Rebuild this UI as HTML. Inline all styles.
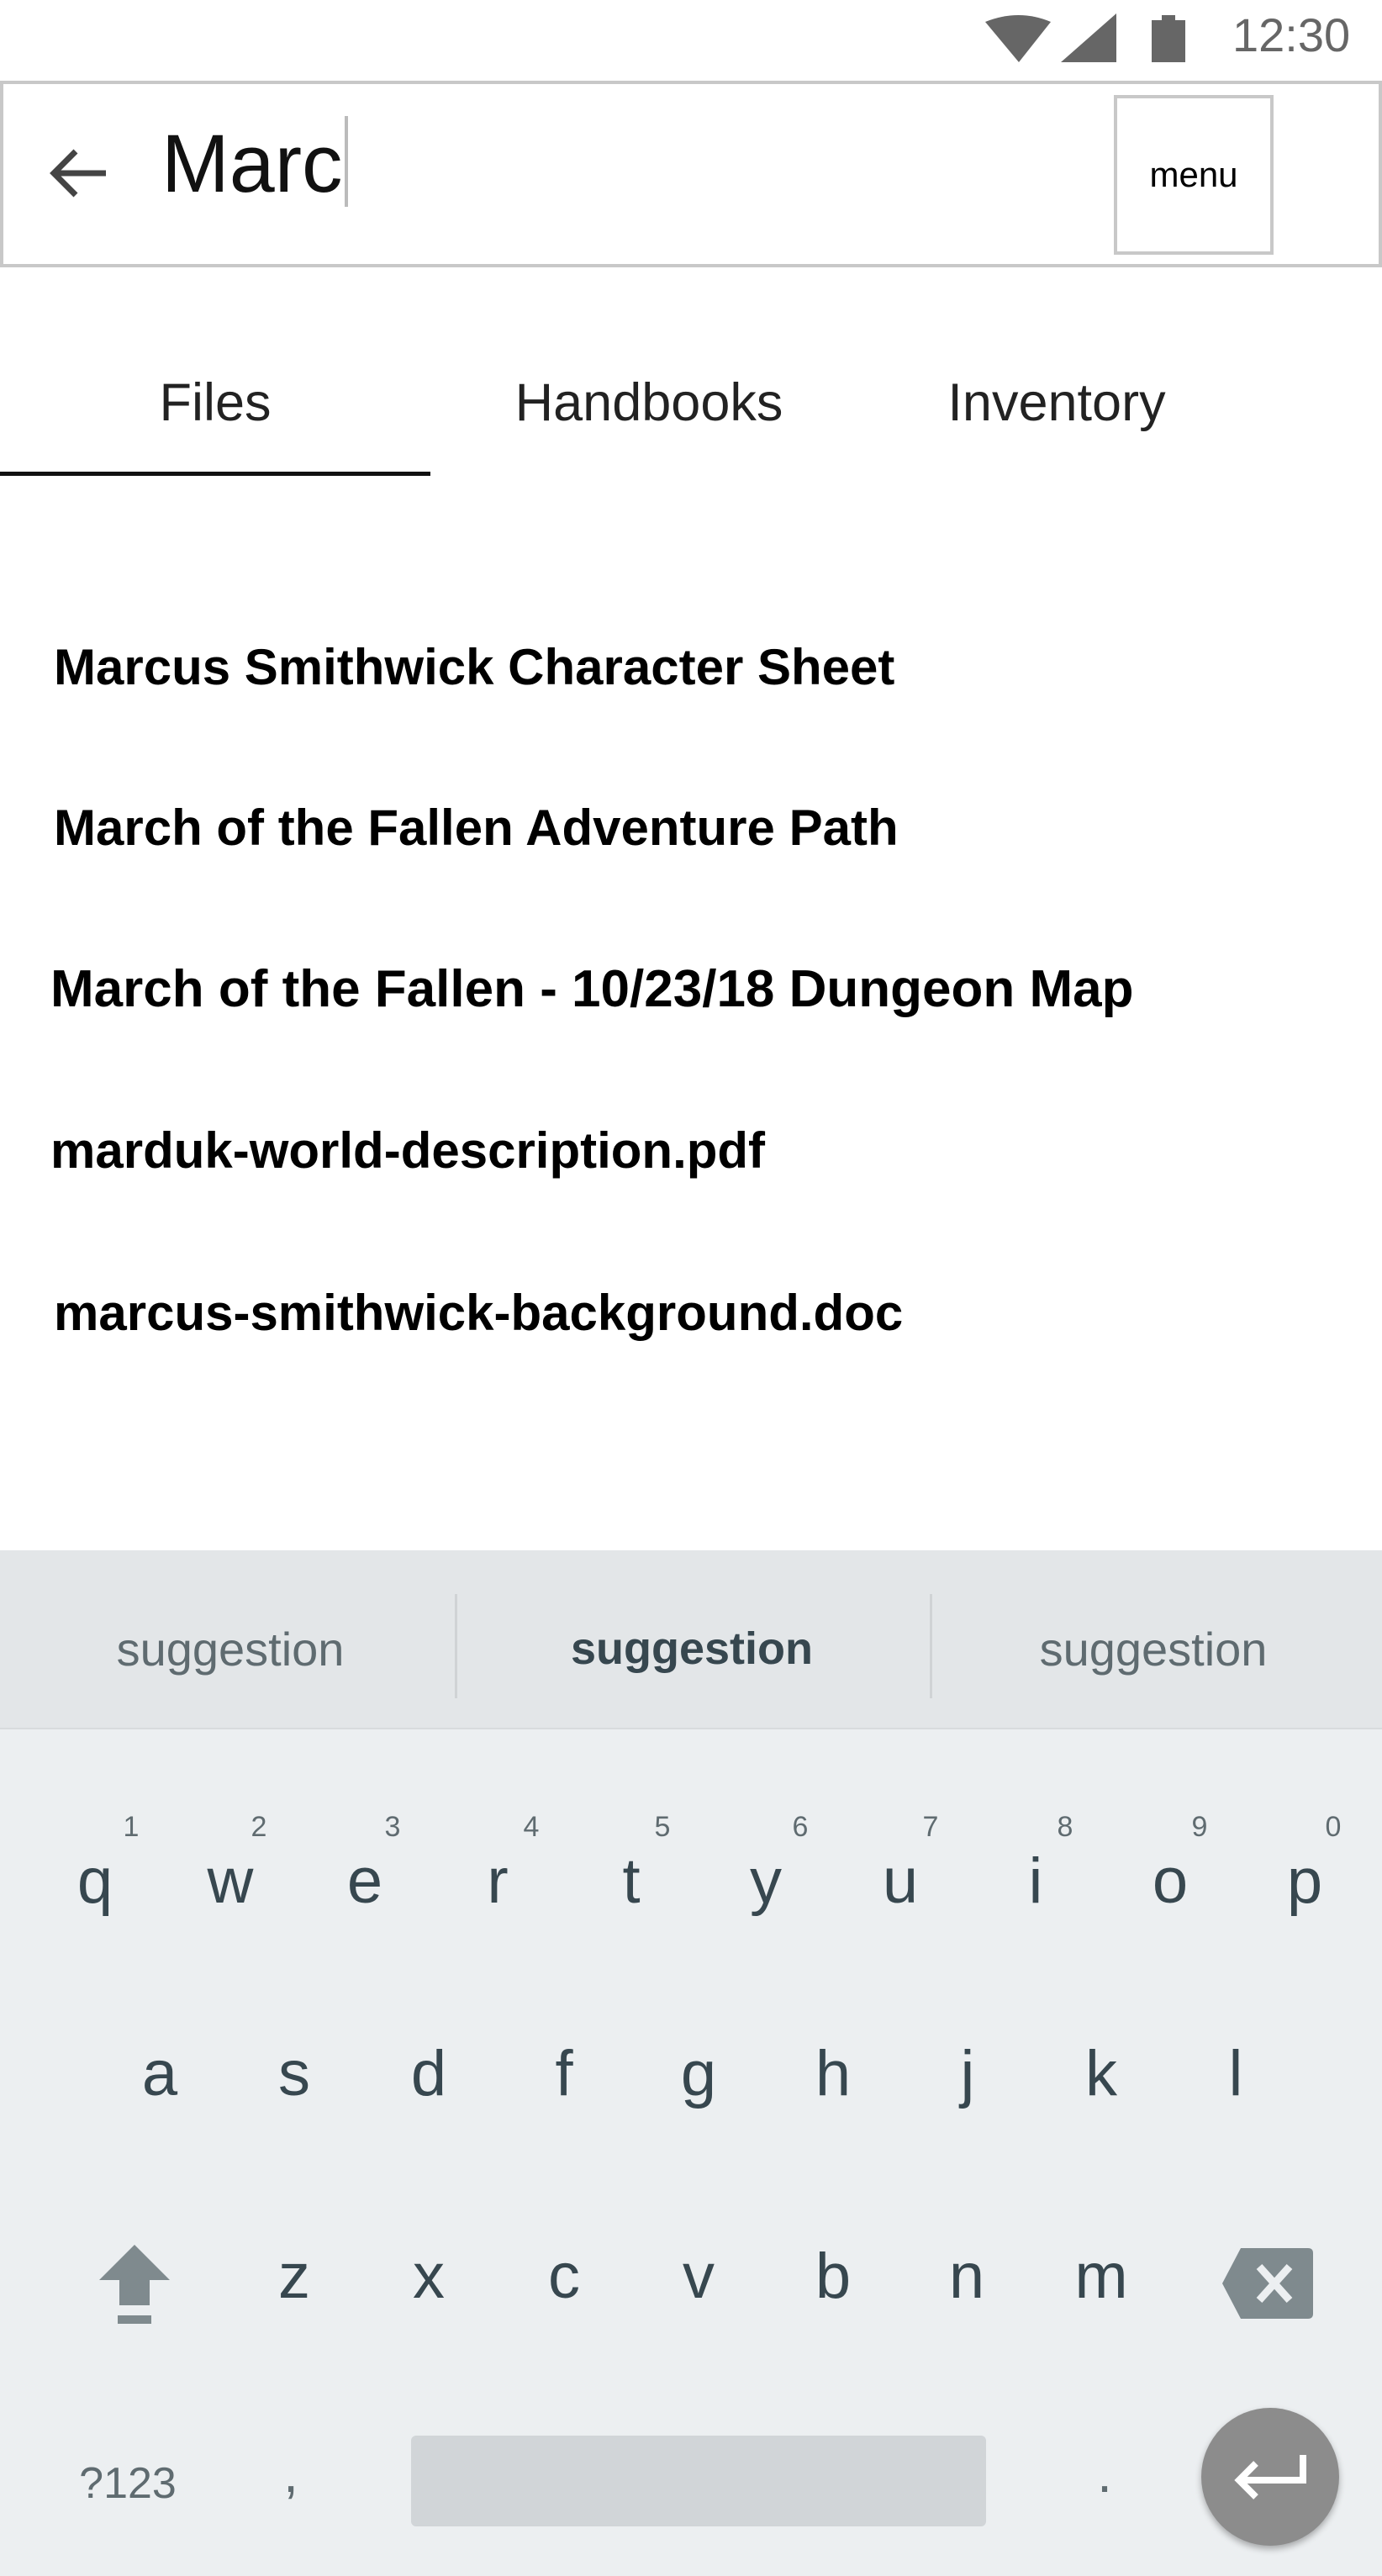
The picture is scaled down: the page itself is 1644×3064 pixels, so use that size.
<!DOCTYPE html>
<html><head><meta charset="utf-8"><style>
*{margin:0;padding:0;box-sizing:border-box}
body{width:1644px;height:3064px;background:#fff;position:relative;overflow:hidden;font-family:"Liberation Sans",sans-serif}
.a{position:absolute;white-space:nowrap}
.c{transform:translateX(-50%)}
.item{position:absolute;left:64px;font-weight:bold;font-size:60px;color:#000;line-height:1}
.k{position:absolute;font-size:76px;color:#37474f;line-height:1;transform:translate(-50%,-50%)}
.n{position:absolute;font-size:34px;color:#5f6b70;line-height:1;transform:translate(-50%,-50%)}
.tab{position:absolute;top:448px;font-size:63px;color:#222;line-height:1;transform:translateX(-50%);font-weight:300}
</style></head><body>
<svg class="a" style="left:1170px;top:16px" width="260" height="58" viewBox="0 0 260 58">
<path d="M2 10 Q42 -6 80 10 L42 58 Z" fill="#666"/>
<path d="M92 58 L158 0 L158 58 Z" fill="#666"/>
<rect x="200" y="8" width="40" height="50" fill="#666"/><rect x="212" y="2" width="16" height="8" fill="#666"/>
</svg>
<div class="a" style="left:1466px;top:14px;font-size:56px;color:#666;line-height:1">12:30</div>
<div class="a" style="left:0;top:96px;width:1644px;height:222px;border:4px solid #c8c8c8"></div>
<svg class="a" style="left:56px;top:174px" width="76" height="64" viewBox="0 0 76 64"><path d="M70 32 H10 M34 6 L8 32 L34 58" stroke="#444" stroke-width="7" fill="none"/></svg>
<div class="a" style="left:192px;top:146px;font-size:97px;color:#111;line-height:1;font-weight:300">Marc</div>
<div class="a" style="left:410px;top:138px;width:4px;height:108px;background:#bbb"></div>
<div class="a" style="left:1325px;top:113px;width:190px;height:190px;border:4px solid #c8c8c8;font-size:42px;line-height:182px;text-align:center;color:#000">menu</div>
<div class="tab" style="left:256px">Files</div>
<div class="tab" style="left:772px">Handbooks</div>
<div class="tab" style="left:1257px">Inventory</div>
<div class="a" style="left:0;top:561px;width:512px;height:5px;background:#111"></div>
<div class="item" style="top:764px">Marcus Smithwick Character Sheet</div>
<div class="item" style="top:955px">March of the Fallen Adventure Path</div>
<div class="item" style="top:1146px;left:60px;font-size:62px">March of the Fallen - 10/23/18 Dungeon Map</div>
<div class="item" style="top:1339px;left:60px">marduk-world-description.pdf</div>
<div class="item" style="top:1532px">marcus-smithwick-background.doc</div>
<div class="a" style="left:0;top:1844px;width:1644px;height:1220px;background:#eceff1"></div>
<div class="a" style="left:0;top:1844px;width:1644px;height:213px;background:#e3e6e8;border-bottom:2px solid #d8dbdd"></div>
<div class="a" style="left:541px;top:1896px;width:3px;height:124px;background:#d0d3d5"></div>
<div class="a" style="left:1106px;top:1896px;width:3px;height:124px;background:#d0d3d5"></div>
<div class="a c" style="left:274px;top:1929px;font-size:56px;color:#5f6b70">suggestion</div>
<div class="a c" style="left:823px;top:1930px;font-size:54px;color:#37474f;font-weight:bold">suggestion</div>
<div class="a c" style="left:1372px;top:1929px;font-size:56px;color:#5f6b70">suggestion</div>
<div class="n" style="left:156px;top:2173px">1</div><div class="k" style="left:113px;top:2238px">q</div>
<div class="n" style="left:308px;top:2173px">2</div><div class="k" style="left:274px;top:2238px">w</div>
<div class="n" style="left:467px;top:2173px">3</div><div class="k" style="left:434px;top:2238px">e</div>
<div class="n" style="left:632px;top:2173px">4</div><div class="k" style="left:592px;top:2238px">r</div>
<div class="n" style="left:788px;top:2173px">5</div><div class="k" style="left:751px;top:2238px">t</div>
<div class="n" style="left:952px;top:2173px">6</div><div class="k" style="left:911px;top:2238px">y</div>
<div class="n" style="left:1107px;top:2173px">7</div><div class="k" style="left:1071px;top:2238px">u</div>
<div class="n" style="left:1267px;top:2173px">8</div><div class="k" style="left:1232px;top:2238px">i</div>
<div class="n" style="left:1427px;top:2173px">9</div><div class="k" style="left:1392px;top:2238px">o</div>
<div class="n" style="left:1586px;top:2173px">0</div><div class="k" style="left:1552px;top:2238px">p</div>
<div class="k" style="left:190px;top:2467px">a</div><div class="k" style="left:350px;top:2467px">s</div>
<div class="k" style="left:510px;top:2467px">d</div><div class="k" style="left:671px;top:2467px">f</div>
<div class="k" style="left:831px;top:2467px">g</div><div class="k" style="left:991px;top:2467px">h</div>
<div class="k" style="left:1151px;top:2467px">j</div><div class="k" style="left:1310px;top:2467px">k</div>
<div class="k" style="left:1470px;top:2467px">l</div>
<svg class="a" style="left:116px;top:2670px" width="88" height="100" viewBox="0 0 88 100"><path d="M44 0 L86 42 H62 V72 H26 V42 H2 Z" fill="#7f8a8e"/><rect x="24" y="84" width="40" height="10" fill="#7f8a8e"/></svg>
<div class="k" style="left:350px;top:2708px">z</div><div class="k" style="left:510px;top:2708px">x</div>
<div class="k" style="left:671px;top:2708px">c</div><div class="k" style="left:831px;top:2708px">v</div>
<div class="k" style="left:991px;top:2708px">b</div><div class="k" style="left:1150px;top:2708px">n</div>
<div class="k" style="left:1310px;top:2708px">m</div>
<svg class="a" style="left:1452px;top:2674px" width="112" height="84" viewBox="0 0 112 84"><path d="M24 0 H104 Q110 0 110 6 V78 Q110 84 104 84 H24 L2 42 Z" fill="#7f8a8e"/><path d="M46 22 L82 62 M82 22 L46 62" stroke="#eceff1" stroke-width="9"/></svg>
<div class="a c" style="left:152px;top:2924px;font-size:52px;color:#5f6b70">?123</div>
<div class="a c" style="left:346px;top:2905px;font-size:64px;color:#5f6b70">,</div>
<div class="a" style="left:489px;top:2897px;width:684px;height:108px;background:#d1d5d8;border-radius:6px"></div>
<div class="a c" style="left:1314px;top:2905px;font-size:64px;color:#5f6b70">.</div>
<div class="a" style="left:1429px;top:2864px;width:164px;height:164px;border-radius:50%;background:#8c8c8c;box-shadow:0 4px 8px rgba(0,0,0,.3)"></div>
<svg class="a" style="left:1466px;top:2916px" width="90" height="60" viewBox="0 0 90 60"><path d="M84 4 V34 H10 M28 14 L8 34 L28 54" stroke="#fff" stroke-width="8" fill="none"/></svg>
</body></html>
